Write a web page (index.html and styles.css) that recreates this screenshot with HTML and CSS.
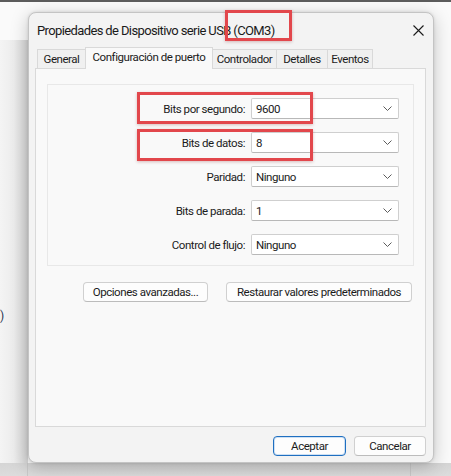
FILE: index.html
```html
<!DOCTYPE html>
<html lang="es">
<head>
<meta charset="utf-8">
<title>Propiedades de Dispositivo serie USB (COM3)</title>
<link rel="stylesheet" href="styles.css">
</head>
<body>
<div class="behind-text">)</div>
<div class="dialog">
  <div class="titlebar">
    <span class="title">Propiedades de Dispositivo serie USB (COM3)</span>
    <svg class="close" width="11" height="11" viewBox="0 0 11 11"><path d="M0.5 0.5 L10.5 10.5 M10.5 0.5 L0.5 10.5" stroke="#1a1a1a" stroke-width="1.1" fill="none"/></svg>
  </div>
  <div class="tabs">
    <div class="tab t-general">General</div>
    <div class="tab active t-config">Configuración de puerto</div>
    <div class="tab t-ctrl">Controlador</div>
    <div class="tab t-det">Detalles</div>
    <div class="tab t-ev">Eventos</div>
  </div>
  <div class="panel">
    <div class="group">
      <div class="row">
        <label class="lbl">Bits por segundo:</label>
        <div class="combo"><span>9600</span><svg width="9" height="5" viewBox="0 0 9 5"><path d="M0.5 0.5 L4.5 4.5 L8.5 0.5" stroke="#5c5c5c" fill="none"/></svg></div>
      </div>
      <div class="row">
        <label class="lbl">Bits de datos:</label>
        <div class="combo"><span>8</span><svg width="9" height="5" viewBox="0 0 9 5"><path d="M0.5 0.5 L4.5 4.5 L8.5 0.5" stroke="#5c5c5c" fill="none"/></svg></div>
      </div>
      <div class="row r3">
        <label class="lbl">Paridad:</label>
        <div class="combo"><span>Ninguno</span><svg width="9" height="5" viewBox="0 0 9 5"><path d="M0.5 0.5 L4.5 4.5 L8.5 0.5" stroke="#5c5c5c" fill="none"/></svg></div>
      </div>
      <div class="row">
        <label class="lbl">Bits de parada:</label>
        <div class="combo"><span>1</span><svg width="9" height="5" viewBox="0 0 9 5"><path d="M0.5 0.5 L4.5 4.5 L8.5 0.5" stroke="#5c5c5c" fill="none"/></svg></div>
      </div>
      <div class="row">
        <label class="lbl">Control de flujo:</label>
        <div class="combo"><span>Ninguno</span><svg width="9" height="5" viewBox="0 0 9 5"><path d="M0.5 0.5 L4.5 4.5 L8.5 0.5" stroke="#5c5c5c" fill="none"/></svg></div>
      </div>
    </div>
    <div class="actions">
      <button class="btn b-adv">Opciones avanzadas...</button>
      <button class="btn b-rest">Restaurar valores predeterminados</button>
    </div>
  </div>
  <div class="footer">
    <button class="btn primary b-ok">Aceptar</button>
    <button class="btn b-cancel">Cancelar</button>
  </div>
  <div class="mark m-title"></div>
  <div class="mark m-bps"></div>
  <div class="mark m-data"></div>
</div>
</body>
</html>
```
FILE: styles.css
```css
* { box-sizing: border-box; }
html, body { margin: 0; padding: 0; }
body {
  width: 451px;
  height: 476px;
  overflow: hidden;
  position: relative;
  font-family: Roboto, "Liberation Sans", Arial, sans-serif;
  font-size: 11.5px;
  letter-spacing: -0.45px;
  color: #1b1b1b;
  padding: 12px 0 0 28px;
  background:
    linear-gradient(#5c5c5c, #5c5c5c) 0 0 / 100% 2px no-repeat,
    linear-gradient(to right, #f4f4f4 0, #ececec 14px, #d6d6d6 27px) 0 40px / 28px 423px no-repeat,
    linear-gradient(to right, #c9c9c9 0, #c9c9c9 1px, transparent 1px) 27px 463px / 1px 13px no-repeat,
    linear-gradient(to right, #c9c9c9 0, #c9c9c9 1px, transparent 1px) 410px 463px / 1px 13px no-repeat,
    linear-gradient(#d5d5d5, #dcdcdc) 0 463px / 100% 13px no-repeat,
    #fafafa;
}
.behind-text {
  position: absolute;
  left: 0;
  top: 309px;
  font-size: 12px;
  color: #2a3550;
}
.dialog {
  position: relative;
  width: 406px;
  height: 451px;
  background: #f3f3f3;
  border: 1px solid #c4c4c4;
  border-radius: 8px;
  box-shadow: 0 4px 18px rgba(0, 0, 0, 0.22), 0 0 3px rgba(0, 0, 0, 0.12);
  display: flex;
  flex-direction: column;
}
.titlebar {
  height: 34px;
  display: flex;
  align-items: center;
  justify-content: space-between;
  padding: 0 9px 0 8px;
}
.title {
  font-size: 13px;
  letter-spacing: -0.62px;
  color: #1a1a1a;
  padding-top: 1px;
}
.close { margin-top: 1px; }
.tabs {
  display: flex;
  align-items: flex-end;
  height: 21px;
  padding-left: 7px;
  position: relative;
  z-index: 1;
}
.tab {
  height: 19px;
  background: #f0f0f0;
  border: 1px solid #d9d9d9;
  border-bottom: none;
  margin-left: -1px;
  display: flex;
  align-items: center;
  justify-content: center;
  color: #1b1b1b;
}
.tab.active {
  height: 22px;
  margin-bottom: -1px;
  background: #f9f9f9;
  padding-bottom: 3px;
}
.t-general { width: 49px; margin-left: 1px; }
.t-config { width: 128px; }
.t-ctrl { width: 65px; }
.t-det { width: 52px; }
.t-ev { width: 46px; }
.panel {
  margin-left: 6px;
  width: 391px;
  height: 359px;
  background: #f9f9f9;
  border: 1px solid #d9d9d9;
  padding: 15px 0 0 11px;
}
.group {
  width: 367px;
  border: 1px solid #e8e8e8;
  padding: 13px 0 10px 0;
  display: flex;
  flex-direction: column;
  gap: 13px;
}
.row {
  display: flex;
  align-items: center;
  gap: 5px;
}
.lbl {
  width: 198px;
  text-align: right;
  padding-right: 1px;
}
.combo {
  width: 148px;
  height: 21px;
  background: #ffffff;
  border: 1px solid #cfcfcf;
  border-bottom-color: #b8b8b8;
  border-radius: 2px;
  display: flex;
  align-items: center;
  justify-content: space-between;
  padding: 0 6px 0 4px;
}
.combo svg { display: block; }
.actions {
  display: flex;
  gap: 18px;
  margin-top: 16px;
  padding-left: 36px;
}
.btn {
  font-family: inherit;
  font-size: 11.5px;
  letter-spacing: -0.45px;
  color: #1b1b1b;
  height: 20px;
  background: #fdfdfd;
  border: 1px solid #d0d0d0;
  border-bottom-color: #bcbcbc;
  border-radius: 4px;
  padding: 0;
  margin: 0;
}
.b-adv { width: 125px; }
.b-rest { width: 186px; }
.footer {
  display: flex;
  justify-content: flex-end;
  gap: 8px;
  padding: 9px 7px 0 0;
}
.b-ok { width: 73px; }
.b-cancel { width: 72px; }
.btn.primary {
  border: 1px solid #1f6fc0;
  box-shadow: inset 0 0 0 1px #cde0f4;
}
.mark {
  position: absolute;
  border: 3px solid #e2474c;
  box-shadow: 0 1px 3px rgba(120, 0, 0, 0.25);
}
.m-title { left: 196px; top: -3px; width: 67px; height: 31px; }
.m-bps { left: 108px; top: 79px; width: 176px; height: 32px; }
.m-data { left: 108px; top: 116px; width: 176px; height: 32px; }
```
